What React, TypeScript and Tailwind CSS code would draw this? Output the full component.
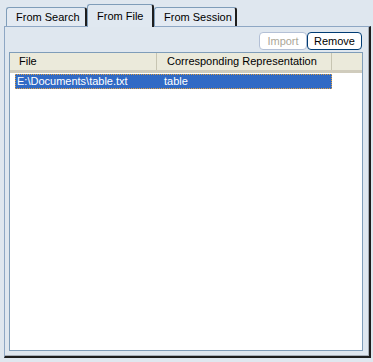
import React from 'react';

const font = { fontFamily: '"Liberation Sans", Arial, sans-serif' };

function Tab({ label, width, active }: { label: string; width: string; active?: boolean }) {
  if (active) {
    return (
      <div className={`relative z-10 -mb-px h-[23px] ${width} rounded-t-[3px] border-t border-l border-[#7f9db9] border-r-2 border-r-[#1e1e1e] bg-[#e0e8f0] pl-[9px] pt-[5px] text-[11px] leading-[13px] text-black`}>
        {label}
      </div>
    );
  }
  return (
    <div className={`h-[19px] ${width} rounded-t-[3px] border-t border-l border-[#7f9db9] border-r-2 border-r-[#1e1e1e] bg-[#e3eaf2] pl-[9px] pt-[3px] text-[11px] leading-[13px] text-black`}>
      {label}
    </div>
  );
}

export default function App() {
  return (
    <div className="h-[362px] w-[373px] bg-[#dfe7ef]" style={font}>
      <div className="flex items-end pl-[6px] pt-[4px]">
        <Tab label="From Search" width="w-[81px]" />
        <Tab label="From File" width="w-[67px]" active />
        <Tab label="From Session" width="w-[83px]" />
      </div>

      <div className="ml-[4px] mr-[2px] flex h-[332px] flex-col border-t border-l border-[#8ea7c4] border-r-2 border-b-2 border-r-[#1e1e1e] border-b-[#1e1e1e] pb-[5px] pl-[4px] pr-[6px] pt-[5px] shadow-[inset_-1px_-1px_0_#a7afb8]">
        <div className="flex justify-end pr-[1px]">
          <button className="h-[18px] w-[48px] rounded-[4px] border border-[#b3c0d6] bg-white text-[11px] leading-[14px] text-[#aca899]">
            Import
          </button>
          <button className="h-[18px] w-[55px] rounded-[4px] border border-[#003c74] bg-white text-[11px] leading-[14px] text-black">
            Remove
          </button>
        </div>

        <div className="mt-[2px] flex-1 border border-[#7f9db9] bg-white">
          <div className="flex h-[20px] border-b-[3px] border-[#d0ccbd] bg-[#ebeadb] text-[11px] leading-[13px] text-black">
            <div className="flex w-[147px] items-center border-r border-[#c7c5b2] pl-[9px]">File</div>
            <div className="flex w-[175px] items-center border-r border-[#c7c5b2] pl-[10px]">
              Corresponding Representation
            </div>
            <div className="flex-1" />
          </div>
          <div className="ml-[5px] mt-[1px] flex h-[15px] w-[317px] items-center border border-dotted border-[#e0a040] bg-[#316ac5] text-[11px] leading-[13px] text-white">
            <div className="w-[141px] pl-[1px]">E:\Documents\table.txt</div>
            <div className="pl-[7px]">table</div>
          </div>
        </div>
      </div>
    </div>
  );
}
